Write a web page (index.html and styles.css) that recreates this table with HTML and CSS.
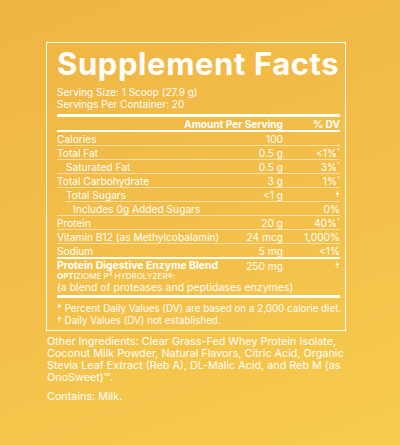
FILE: index.html
```html
<!DOCTYPE html>
<html lang="en">
<head>
    <meta charset="UTF-8" />
    <title>Supplement Facts</title>
    <link rel="stylesheet" href="styles.css">
</head>
<body>
    <div class="page">
        <div class="facts">
            <h1 class="title">Supplement Facts</h1>
            <p class="serving">Serving Size: 1 Scoop (27.9 g)<br>Servings Per Container: 20</p>
            <div class="bar"></div>
            <div class="row head">
                <span class="name"></span>
                <span class="amount">Amount Per Serving</span>
                <span class="dv">% DV</span>
            </div>
            <div class="row">
                <span class="name">Calories</span>
                <span class="amount">100</span>
                <span class="dv"></span>
            </div>
            <div class="row">
                <span class="name">Total Fat</span>
                <span class="amount">0.5 g</span>
                <span class="dv">&lt;1%<sup>*</sup></span>
            </div>
            <div class="row">
                <span class="name indent">Saturated Fat</span>
                <span class="amount">0.5 g</span>
                <span class="dv">3%<sup>*</sup></span>
            </div>
            <div class="row">
                <span class="name">Total Carbohydrate</span>
                <span class="amount">3 g</span>
                <span class="dv">1%<sup>*</sup></span>
            </div>
            <div class="row sub-line">
                <span class="name indent">Total Sugars</span>
                <span class="amount">&lt;1 g</span>
                <span class="dv">†</span>
            </div>
            <div class="row">
                <span class="name indent-2">Includes 0g Added Sugars</span>
                <span class="amount"></span>
                <span class="dv">0%</span>
            </div>
            <div class="row">
                <span class="name">Protein</span>
                <span class="amount">20 g</span>
                <span class="dv">40%<sup>*</sup></span>
            </div>
            <div class="row">
                <span class="name">Vitamin B12 (as Methylcobalamin)</span>
                <span class="amount">24 mcg</span>
                <span class="dv">1,000%</span>
            </div>
            <div class="row thick-line">
                <span class="name">Sodium</span>
                <span class="amount">5 mg</span>
                <span class="dv">&lt;1%</span>
            </div>
            <div class="row blend">
                <span class="name strong">Protein Digestive Enzyme Blend</span>
                <span class="amount">250 mg</span>
                <span class="dv">†</span>
            </div>
            <p class="brand"><b>OPTI</b>ZIOME P³ HYDROLYZER®:</p>
            <p class="blend-note">(a blend of proteases and peptidases enzymes)</p>
            <div class="bar"></div>
            <p class="note">* Percent Daily Values (DV) are based on a 2,000 calorie diet.<br>† Daily Values (DV) not established.</p>
        </div>
        <p class="ingredients">Other Ingredients: Clear Grass-Fed Whey Protein Isolate, Coconut Milk Powder, Natural Flavors, Citric Acid, Organic Stevia Leaf Extract (Reb A), DL-Malic Acid, and Reb M (as OnoSweet)™.</p>
        <p class="ingredients">Contains: Milk.</p>
    </div>
</body>
</html>
```

FILE: styles.css
```css
body {
    margin: 0;
    font-family: Inter, "Liberation Sans", sans-serif;
    color: #fff;
}
.page {
    width: 400px;
    height: 445px;
    box-sizing: border-box;
    padding: 42px 44px 0 46px;
    background: linear-gradient(160deg, #f0b443 0%, #f3c04a 55%, #f7cc4f 100%);
}
.facts {
    width: 283px;
    border: 1px solid #fff;
    padding: 3px 5px 3px 10px;
}
.title {
    margin: 0;
    font-size: 31px;
    font-weight: 700;
    line-height: 36px;
    letter-spacing: 0.6px;
    white-space: nowrap;
}
.serving {
    margin: 4px 0 4px;
    font-size: 10px;
    line-height: 12px;
}
.bar {
    height: 3px;
    background: #fff;
}
.row {
    display: flex;
    align-items: center;
    height: 13px;
    font-size: 10.2px;
    border-bottom: 1px solid rgba(255, 255, 255, 0.55);
    white-space: nowrap;
}
.row.head {
    height: 13px;
    font-size: 10.1px;
    font-weight: 700;
    border-bottom: 2px solid #fff;
}
.row.thick-line {
    border-bottom: 2px solid #fff;
}
.row.blend {
    border-bottom: none;
}
.row.sub-line {
    border-bottom: none;
    background: linear-gradient(rgba(255, 255, 255, 0.55), rgba(255, 255, 255, 0.55)) no-repeat 8px 100% / calc(100% - 8px) 1px;
    height: 14px;
}
.name {
    flex: 1;
    min-width: 0;
}
.indent {
    padding-left: 9px;
}
.indent-2 {
    padding-left: 16px;
}
.strong {
    font-size: 10.4px;
    font-weight: 700;
}
.amount {
    flex: none;
    text-align: right;
}
.dv {
    flex: none;
    width: 57px;
    text-align: right;
}
sup {
    font-size: 6px;
    vertical-align: 4px;
    line-height: 0;
}
.brand {
    margin: 0;
    font-size: 8px;
    line-height: 9px;
}
.blend-note {
    margin: 0 0 1px;
    font-size: 10.5px;
    line-height: 13px;
}
.note {
    margin: 5px 0 0;
    font-size: 9.8px;
    line-height: 12px;
    white-space: nowrap;
}
.ingredients {
    margin: 5px 0 0 1px;
    font-size: 10.8px;
    line-height: 12px;
}
.ingredients + .ingredients {
    margin-top: 7px;
}
```
